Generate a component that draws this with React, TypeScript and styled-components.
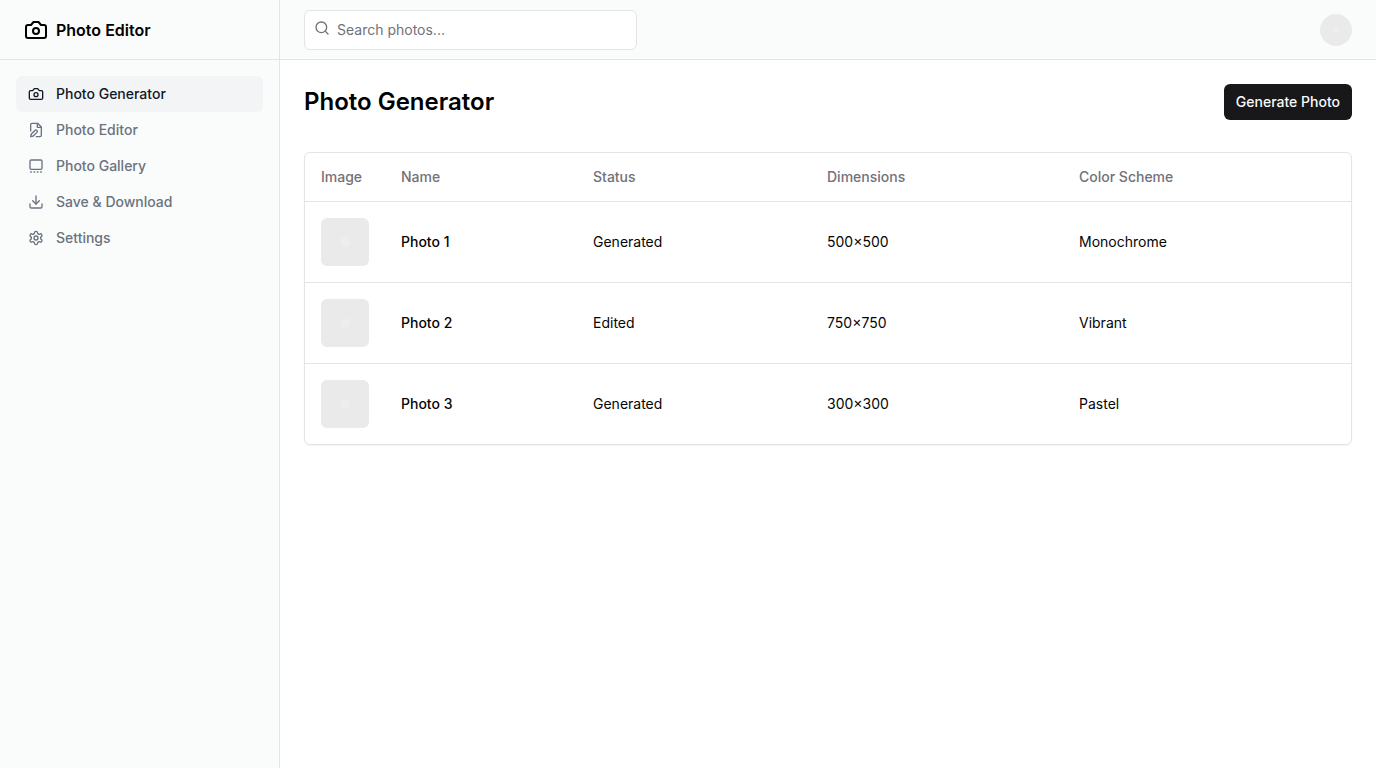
import React from "react";
import styled, { createGlobalStyle } from "styled-components";

const GlobalStyle = createGlobalStyle`
  *, *::before, *::after { box-sizing: border-box; }
  body {
    margin: 0;
    background: #ffffff;
    color: #050506;
    font-family: Inter, "Liberation Sans", sans-serif;
    font-size: 14px;
    line-height: 20px;
  }
  button, input { font: inherit; }
`;

const Shell = styled.div`
  display: grid;
  grid-template-columns: 280px minmax(0, 1fr);
  min-height: 100vh;
`;

const Sidebar = styled.aside`
  background: #fafcfb;
  border-right: 1px solid #e4e4e7;
`;

const BrandBar = styled.div`
  display: flex;
  align-items: center;
  height: 60px;
  padding: 0 24px;
  border-bottom: 1px solid #e4e4e7;
`;

const Brand = styled.a`
  display: flex;
  align-items: center;
  gap: 8px;
  color: #000000;
  font-size: 16px;
  line-height: 24px;
  font-weight: 600;
  text-decoration: none;
`;

const Nav = styled.nav`
  display: grid;
  padding: 16px;
`;

const NavLink = styled.a<{ $active?: boolean }>`
  display: flex;
  align-items: center;
  gap: 12px;
  padding: 8px 12px;
  border-radius: 6px;
  background: ${(p) => (p.$active ? "#f3f4f6" : "transparent")};
  color: ${(p) => (p.$active ? "#111827" : "#6b7280")};
  font-weight: 500;
  text-decoration: none;
`;

const Column = styled.div`
  display: flex;
  flex-direction: column;
`;

const TopBar = styled.header`
  display: flex;
  align-items: center;
  gap: 16px;
  height: 60px;
  padding: 0 24px;
  background: #fafcfb;
  border-bottom: 1px solid #e4e4e7;
`;

const SearchForm = styled.form`
  position: relative;
  flex: 1;
  color: #71717a;

  svg {
    position: absolute;
    left: 10px;
    top: 10px;
  }
`;

const SearchInput = styled.input`
  display: block;
  width: calc(100% / 3);
  height: 40px;
  padding: 8px 12px 8px 32px;
  border: 1px solid #e4e4e7;
  border-radius: 6px;
  background: #ffffff;
  color: #09090b;

  &::placeholder { color: #71717a; opacity: 1; }
`;

const Avatar = styled.button`
  width: 32px;
  height: 32px;
  padding: 0;
  border: 0;
  border-radius: 50%;
  background: radial-gradient(circle, #eeeeee 0 2px, #eaeaea 3px);
`;

const Main = styled.main`
  display: flex;
  flex-direction: column;
  gap: 32px;
  padding: 24px;
`;

const Heading = styled.div`
  display: flex;
  align-items: center;
  justify-content: space-between;
`;

const Title = styled.h1`
  margin: 0;
  color: #000000;
  font-size: 24px;
  line-height: 32px;
  font-weight: 600;
`;

const PrimaryButton = styled.button`
  height: 36px;
  padding: 0 12px;
  border: 0;
  border-radius: 6px;
  background: #18181b;
  color: #fafafa;
  font-weight: 500;
`;

const TableCard = styled.div`
  border: 1px solid #e4e4e7;
  border-radius: 6px;
  box-shadow: 0 1px 2px rgba(0, 0, 0, 0.05);
`;

const Table = styled.table`
  width: 100%;
  border-collapse: collapse;

  tbody tr { border-top: 1px solid #e4e4e7; }
`;

const HeadCell = styled.th<{ $width: number }>`
  width: ${(p) => p.$width}px;
  height: 48px;
  padding: 0 16px;
  color: #71717a;
  font-weight: 500;
  text-align: left;
`;

const Cell = styled.td<{ $strong?: boolean }>`
  padding: 16px;
  font-weight: ${(p) => (p.$strong ? 500 : 400)};
`;

const Thumbnail = styled.div`
  width: 48px;
  height: 48px;
  border-radius: 6px;
  background: radial-gradient(circle, #eeeeee 0 3px, #eaeaea 6px);
`;

function Icon({ size = 16, children }: { size?: number; children: React.ReactNode }) {
  return (
    <svg
      width={size}
      height={size}
      viewBox="0 0 24 24"
      fill="none"
      stroke="currentColor"
      strokeWidth="2"
      strokeLinecap="round"
      strokeLinejoin="round"
      aria-hidden="true"
    >
      {children}
    </svg>
  );
}

const cameraShape = (
  <>
    <path d="M14.5 4h-5L7 7H4a2 2 0 0 0-2 2v9a2 2 0 0 0 2 2h16a2 2 0 0 0 2-2V9a2 2 0 0 0-2-2h-3l-2.5-3z" />
    <circle cx="12" cy="13" r="3" />
  </>
);

const navItems = [
  { label: "Photo Generator", active: true, shape: cameraShape },
  {
    label: "Photo Editor",
    shape: (
      <>
        <path d="M4 13.5V4a2 2 0 0 1 2-2h8.5L20 7.5V20a2 2 0 0 1-2 2h-5.5" />
        <polyline points="14 2 14 8 20 8" />
        <path d="M10.42 12.61a2.1 2.1 0 1 1 2.97 2.97L7.95 21 4 22l.99-3.95 5.43-5.44Z" />
      </>
    ),
  },
  {
    label: "Photo Gallery",
    shape: (
      <>
        <rect width="18" height="14" x="3" y="3" rx="2" />
        <path d="M4 21h1M9 21h1M14 21h1M19 21h1" />
      </>
    ),
  },
  {
    label: "Save & Download",
    shape: (
      <>
        <path d="M21 15v4a2 2 0 0 1-2 2H5a2 2 0 0 1-2-2v-4" />
        <polyline points="7 10 12 15 17 10" />
        <line x1="12" x2="12" y1="15" y2="3" />
      </>
    ),
  },
  {
    label: "Settings",
    shape: (
      <>
        <path d="M12.22 2h-.44a2 2 0 0 0-2 2v.18a2 2 0 0 1-1 1.73l-.43.25a2 2 0 0 1-2 0l-.15-.08a2 2 0 0 0-2.73.73l-.22.38a2 2 0 0 0 .73 2.73l.15.1a2 2 0 0 1 1 1.72v.51a2 2 0 0 1-1 1.74l-.15.09a2 2 0 0 0-.73 2.73l.22.38a2 2 0 0 0 2.73.73l.15-.08a2 2 0 0 1 2 0l.43.25a2 2 0 0 1 1 1.73V20a2 2 0 0 0 2 2h.44a2 2 0 0 0 2-2v-.18a2 2 0 0 1 1-1.73l.43-.25a2 2 0 0 1 2 0l.15.08a2 2 0 0 0 2.73-.73l.22-.39a2 2 0 0 0-.73-2.73l-.15-.08a2 2 0 0 1-1-1.74v-.5a2 2 0 0 1 1-1.74l.15-.09a2 2 0 0 0 .73-2.73l-.22-.38a2 2 0 0 0-2.73-.73l-.15.08a2 2 0 0 1-2 0l-.43-.25a2 2 0 0 1-1-1.73V4a2 2 0 0 0-2-2z" />
        <circle cx="12" cy="12" r="3" />
      </>
    ),
  },
];

const columns = [
  { label: "Image", width: 80 },
  { label: "Name", width: 192 },
  { label: "Status", width: 234 },
  { label: "Dimensions", width: 252 },
  { label: "Color Scheme", width: 288 },
];

const photos = [
  { name: "Photo 1", status: "Generated", dimensions: "500x500", scheme: "Monochrome" },
  { name: "Photo 2", status: "Edited", dimensions: "750x750", scheme: "Vibrant" },
  { name: "Photo 3", status: "Generated", dimensions: "300x300", scheme: "Pastel" },
];

export default function App() {
  return (
    <>
      <GlobalStyle />
      <Shell>
        <Sidebar>
          <BrandBar>
            <Brand href="#">
              <Icon size={24}>{cameraShape}</Icon>
              Photo Editor
            </Brand>
          </BrandBar>
          <Nav>
            {navItems.map((item) => (
              <NavLink key={item.label} href="#" $active={item.active}>
                <Icon>{item.shape}</Icon>
                {item.label}
              </NavLink>
            ))}
          </Nav>
        </Sidebar>
        <Column>
          <TopBar>
            <SearchForm>
              <Icon>
                <circle cx="11" cy="11" r="8" />
                <path d="m21 21-4.3-4.3" />
              </Icon>
              <SearchInput type="search" placeholder="Search photos..." aria-label="Search photos" />
            </SearchForm>
            <Avatar type="button" aria-label="Account" />
          </TopBar>
          <Main>
            <Heading>
              <Title>Photo Generator</Title>
              <PrimaryButton type="button">Generate Photo</PrimaryButton>
            </Heading>
            <TableCard>
              <Table>
                <thead>
                  <tr>
                    {columns.map((column) => (
                      <HeadCell key={column.label} $width={column.width}>
                        {column.label}
                      </HeadCell>
                    ))}
                  </tr>
                </thead>
                <tbody>
                  {photos.map((photo) => (
                    <tr key={photo.name}>
                      <Cell>
                        <Thumbnail />
                      </Cell>
                      <Cell $strong>{photo.name}</Cell>
                      <Cell>{photo.status}</Cell>
                      <Cell>{photo.dimensions}</Cell>
                      <Cell>{photo.scheme}</Cell>
                    </tr>
                  ))}
                </tbody>
              </Table>
            </TableCard>
          </Main>
        </Column>
      </Shell>
    </>
  );
}
